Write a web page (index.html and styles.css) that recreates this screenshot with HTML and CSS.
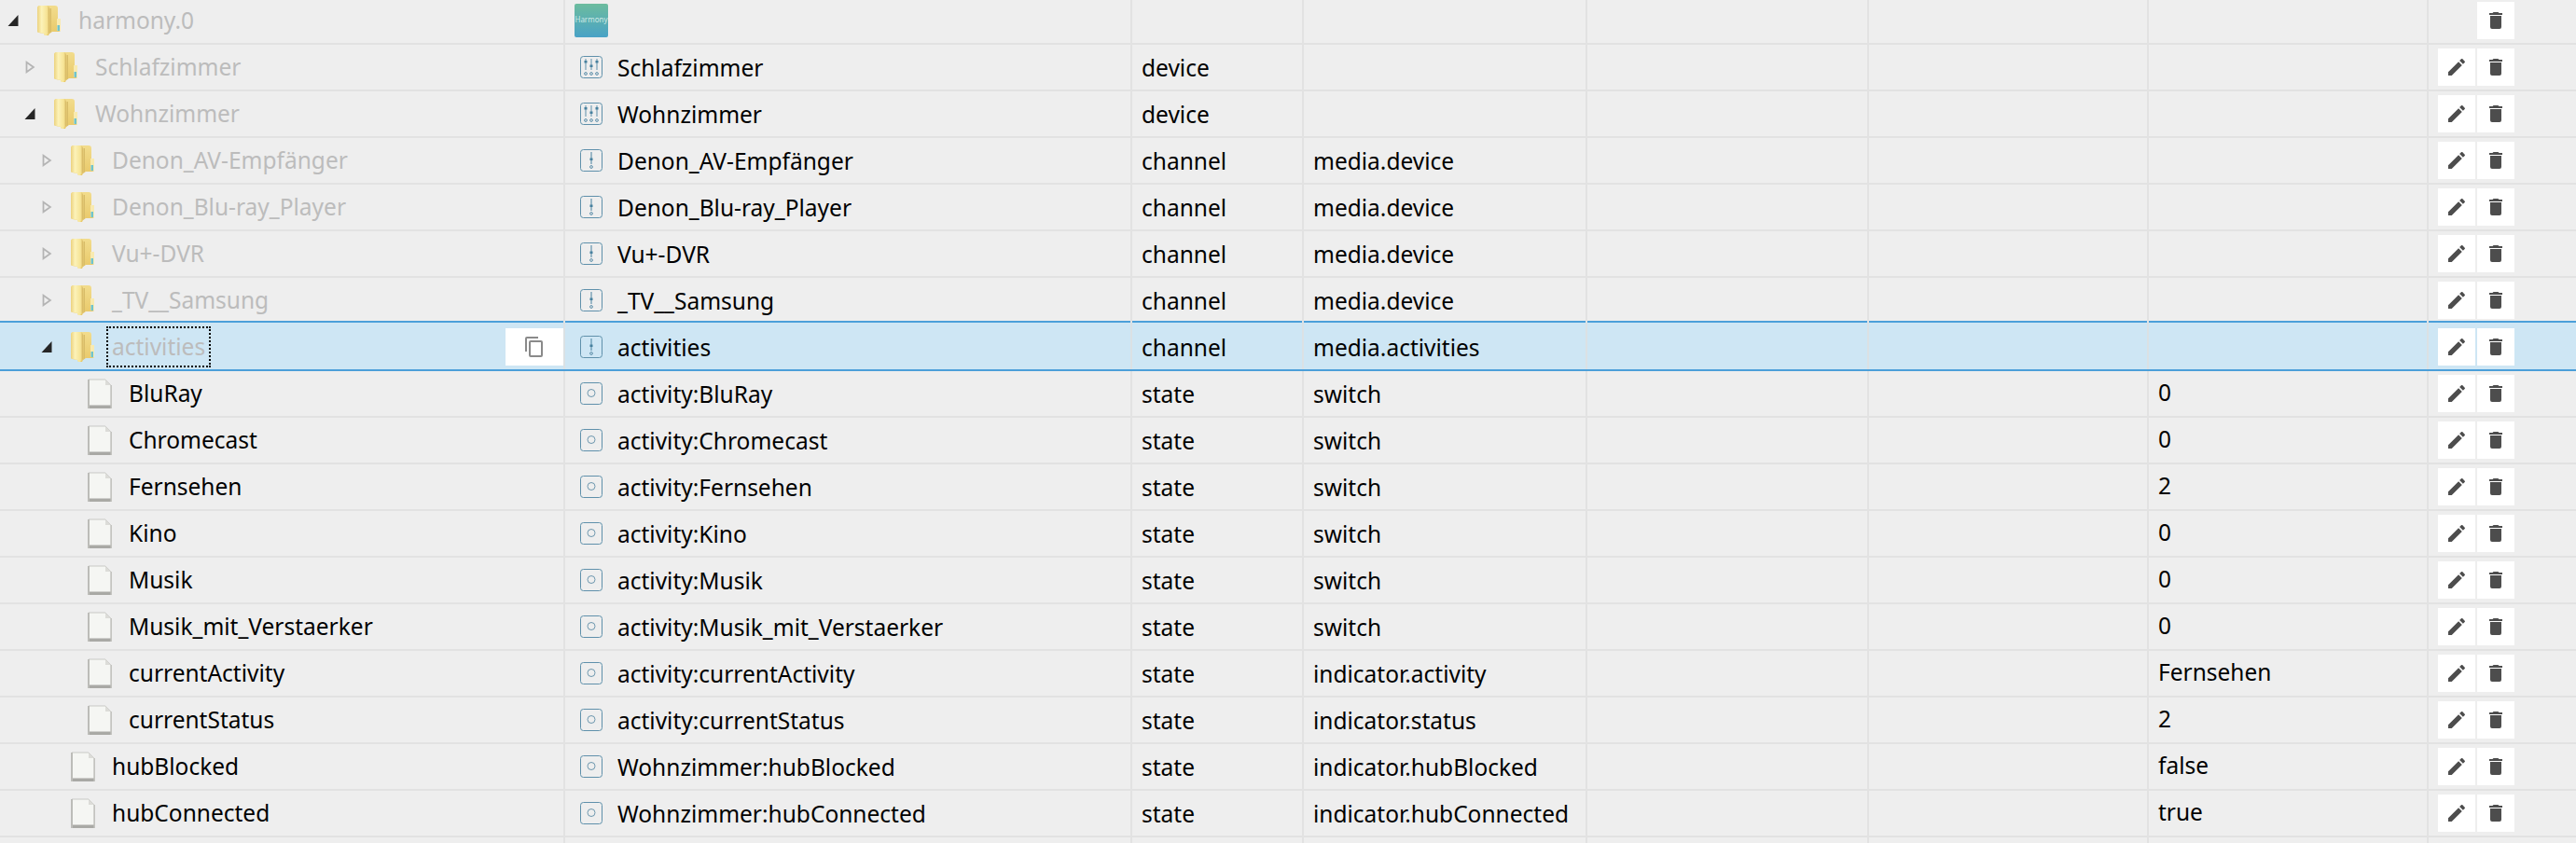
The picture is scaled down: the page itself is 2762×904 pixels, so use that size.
FILE: index.html
```html
<!DOCTYPE html>
<html lang="de">
<head>
<meta charset="utf-8">
<title>harmony.0</title>
<link rel="stylesheet" href="styles.css">
</head>
<body>
<svg class="defs" width="0" height="0" aria-hidden="true">
<defs>
<linearGradient id="fg" x1="0" y1="0" x2="0" y2="1"><stop offset="0" stop-color="#f2dc8c"/><stop offset="1" stop-color="#e8c868"/></linearGradient>
<linearGradient id="fd" x1="0" y1="0" x2="1" y2="0"><stop offset="0" stop-color="#ecd27e"/><stop offset=".35" stop-color="#fcf2b8"/><stop offset=".8" stop-color="#f6e394"/><stop offset="1" stop-color="#d4b45e"/></linearGradient>
<symbol id="folder" viewBox="0 0 26 32">
<path d="M3 0h16a3 3 0 0 1 3 3v11l3 1v11a2 2 0 0 1-2 2h-7l-3 2-1 2H8l-1-2-5-1a2 2 0 0 1-2-2V3a3 3 0 0 1 3-3z" fill="url(#fg)"/>
<path d="M3 0h7c2 0 3 2 3 4v25l-3 3H8l-1-2-5-1a2 2 0 0 1-2-2V3a3 3 0 0 1 3-3z" fill="url(#fd)"/>
<path d="M13.500 3h1.500v25l-1.500 2z" fill="#d8bc68"/>
<rect x="21" y="14" width="4" height="13" fill="#f8eab0"/><rect x="21.500" y="21" width="2.500" height="6" fill="#70c3cc"/>
</symbol>
<symbol id="file" viewBox="0 0 26 32">
<path d="M1 1h18l6 6v24H1z" fill="#f5f6f3" stroke="#c9c9c6"/>
<path d="M19 1v6h6z" fill="#dcdcd8"/>
<path d="M1 28.500h24V32H1z" fill="#a9a9a5"/><path d="M0 1h2v31H0z" fill="#bcbcb8"/><path d="M24.500 7h1.500v25h-1.500z" fill="#c4c4c0"/>
</symbol>
<symbol id="open" viewBox="0 0 12 14"><path d="M11.500 1v12H.5z" fill="#262626"/></symbol>
<symbol id="closed" viewBox="0 0 12 16"><path d="M2 2l8.500 6L2 14z" fill="none" stroke="#b4b4b4" stroke-width="2"/></symbol>
<symbol id="t-device" viewBox="0 0 24 24"><rect x=".5" y=".5" width="23" height="23" rx="3" fill="none" stroke="#5f90ab"/><path d="M6 3v12M12 3v12M18 3v12" stroke="#5f90ab" fill="none"/><path d="M4.500 5h3v2.500h-3zM10.500 9.500h3v2.500h-3zM16.500 5h3v2.500h-3z" fill="#47809e"/><circle cx="6" cy="19" r="1.400" fill="none" stroke="#5f90ab"/><circle cx="12" cy="19" r="1.400" fill="none" stroke="#5f90ab"/><circle cx="18" cy="19" r="1.400" fill="none" stroke="#5f90ab"/></symbol>
<symbol id="t-channel" viewBox="0 0 24 24"><rect x=".5" y=".5" width="23" height="23" rx="3" fill="none" stroke="#5f90ab"/><path d="M12 3v13" stroke="#47809e" fill="none"/><path d="M10.500 9.500h3v2.500h-3z" fill="#47809e"/><circle cx="12" cy="19" r="1.400" fill="none" stroke="#5f90ab"/></symbol>
<symbol id="t-state" viewBox="0 0 24 24"><rect x=".5" y=".5" width="23" height="23" rx="3" fill="none" stroke="#5f90ab"/><circle cx="12" cy="11.500" r="4" fill="none" stroke="#6d97ae"/></symbol>
<symbol id="edit" viewBox="0 0 24 24"><path d="M20.710 7.040c.39-.39.39-1.040 0-1.410l-2.340-2.340c-.37-.39-1.020-.39-1.410 0l-1.840 1.830 3.750 3.750M3 17.250V21h3.750L17.810 9.930l-3.750-3.750z"/></symbol>
<symbol id="del" viewBox="0 0 24 24"><path d="M19 4h-3.500l-1-1h-5l-1 1H5v2h14M6 19a2 2 0 0 0 2 2h8a2 2 0 0 0 2-2V7H6z"/></symbol>
<symbol id="copy" viewBox="0 0 24 24"><path d="M19 21H8V7h11m0-2H8a2 2 0 0 0-2 2v14a2 2 0 0 0 2 2h11a2 2 0 0 0 2-2V7a2 2 0 0 0-2-2m-3-4H4a2 2 0 0 0-2 2v14h2V3h12z"/></symbol>
</defs>
</svg>
<main class="tree">

<div class="row">
  <div class="cell name l0"><svg class="arrow"><use href="#open"/></svg><svg class="node"><use href="#folder"/></svg><span class="label muted">harmony.0</span></div>
  <div class="cell"><span class="logo">Harmony</span></div>
  <div class="cell"></div><div class="cell"></div><div class="cell"></div><div class="cell"></div><div class="cell"></div>
  <div class="cell actions"><span class="btn ghost"></span><span class="btn"><svg class="i"><use href="#del"/></svg></span></div>
</div>

<div class="row">
  <div class="cell name l1"><svg class="arrow"><use href="#closed"/></svg><svg class="node"><use href="#folder"/></svg><span class="label muted">Schlafzimmer</span></div>
  <div class="cell"><svg class="type"><use href="#t-device"/></svg>Schlafzimmer</div>
  <div class="cell">device</div><div class="cell"></div><div class="cell"></div><div class="cell"></div><div class="cell"></div>
  <div class="cell actions"><span class="btn"><svg class="i"><use href="#edit"/></svg></span><span class="btn"><svg class="i"><use href="#del"/></svg></span></div>
</div>

<div class="row">
  <div class="cell name l1"><svg class="arrow"><use href="#open"/></svg><svg class="node"><use href="#folder"/></svg><span class="label muted">Wohnzimmer</span></div>
  <div class="cell"><svg class="type"><use href="#t-device"/></svg>Wohnzimmer</div>
  <div class="cell">device</div><div class="cell"></div><div class="cell"></div><div class="cell"></div><div class="cell"></div>
  <div class="cell actions"><span class="btn"><svg class="i"><use href="#edit"/></svg></span><span class="btn"><svg class="i"><use href="#del"/></svg></span></div>
</div>

<div class="row">
  <div class="cell name l2"><svg class="arrow"><use href="#closed"/></svg><svg class="node"><use href="#folder"/></svg><span class="label muted">Denon_AV-Empfänger</span></div>
  <div class="cell"><svg class="type"><use href="#t-channel"/></svg>Denon_AV-Empfänger</div>
  <div class="cell">channel</div><div class="cell">media.device</div><div class="cell"></div><div class="cell"></div><div class="cell"></div>
  <div class="cell actions"><span class="btn"><svg class="i"><use href="#edit"/></svg></span><span class="btn"><svg class="i"><use href="#del"/></svg></span></div>
</div>

<div class="row">
  <div class="cell name l2"><svg class="arrow"><use href="#closed"/></svg><svg class="node"><use href="#folder"/></svg><span class="label muted">Denon_Blu-ray_Player</span></div>
  <div class="cell"><svg class="type"><use href="#t-channel"/></svg>Denon_Blu-ray_Player</div>
  <div class="cell">channel</div><div class="cell">media.device</div><div class="cell"></div><div class="cell"></div><div class="cell"></div>
  <div class="cell actions"><span class="btn"><svg class="i"><use href="#edit"/></svg></span><span class="btn"><svg class="i"><use href="#del"/></svg></span></div>
</div>

<div class="row">
  <div class="cell name l2"><svg class="arrow"><use href="#closed"/></svg><svg class="node"><use href="#folder"/></svg><span class="label muted">Vu+-DVR</span></div>
  <div class="cell"><svg class="type"><use href="#t-channel"/></svg>Vu+-DVR</div>
  <div class="cell">channel</div><div class="cell">media.device</div><div class="cell"></div><div class="cell"></div><div class="cell"></div>
  <div class="cell actions"><span class="btn"><svg class="i"><use href="#edit"/></svg></span><span class="btn"><svg class="i"><use href="#del"/></svg></span></div>
</div>

<div class="row">
  <div class="cell name l2"><svg class="arrow"><use href="#closed"/></svg><svg class="node"><use href="#folder"/></svg><span class="label muted">_TV__Samsung</span></div>
  <div class="cell"><svg class="type"><use href="#t-channel"/></svg>_TV__Samsung</div>
  <div class="cell">channel</div><div class="cell">media.device</div><div class="cell"></div><div class="cell"></div><div class="cell"></div>
  <div class="cell actions"><span class="btn"><svg class="i"><use href="#edit"/></svg></span><span class="btn"><svg class="i"><use href="#del"/></svg></span></div>
</div>

<div class="row selected">
  <div class="cell name l2"><svg class="arrow"><use href="#open"/></svg><svg class="node"><use href="#folder"/></svg><span class="label muted focus">activities</span><span class="btn copy"><svg class="i"><use href="#copy"/></svg></span></div>
  <div class="cell"><svg class="type"><use href="#t-channel"/></svg>activities</div>
  <div class="cell">channel</div><div class="cell">media.activities</div><div class="cell"></div><div class="cell"></div><div class="cell"></div>
  <div class="cell actions"><span class="btn"><svg class="i"><use href="#edit"/></svg></span><span class="btn"><svg class="i"><use href="#del"/></svg></span></div>
</div>

<div class="row">
  <div class="cell name l3"><span class="arrow"></span><svg class="node"><use href="#file"/></svg><span class="label">BluRay</span></div>
  <div class="cell"><svg class="type"><use href="#t-state"/></svg>activity:BluRay</div>
  <div class="cell">state</div><div class="cell">switch</div><div class="cell"></div><div class="cell"></div><div class="cell value">0</div>
  <div class="cell actions"><span class="btn"><svg class="i"><use href="#edit"/></svg></span><span class="btn"><svg class="i"><use href="#del"/></svg></span></div>
</div>

<div class="row">
  <div class="cell name l3"><span class="arrow"></span><svg class="node"><use href="#file"/></svg><span class="label">Chromecast</span></div>
  <div class="cell"><svg class="type"><use href="#t-state"/></svg>activity:Chromecast</div>
  <div class="cell">state</div><div class="cell">switch</div><div class="cell"></div><div class="cell"></div><div class="cell value">0</div>
  <div class="cell actions"><span class="btn"><svg class="i"><use href="#edit"/></svg></span><span class="btn"><svg class="i"><use href="#del"/></svg></span></div>
</div>

<div class="row">
  <div class="cell name l3"><span class="arrow"></span><svg class="node"><use href="#file"/></svg><span class="label">Fernsehen</span></div>
  <div class="cell"><svg class="type"><use href="#t-state"/></svg>activity:Fernsehen</div>
  <div class="cell">state</div><div class="cell">switch</div><div class="cell"></div><div class="cell"></div><div class="cell value">2</div>
  <div class="cell actions"><span class="btn"><svg class="i"><use href="#edit"/></svg></span><span class="btn"><svg class="i"><use href="#del"/></svg></span></div>
</div>

<div class="row">
  <div class="cell name l3"><span class="arrow"></span><svg class="node"><use href="#file"/></svg><span class="label">Kino</span></div>
  <div class="cell"><svg class="type"><use href="#t-state"/></svg>activity:Kino</div>
  <div class="cell">state</div><div class="cell">switch</div><div class="cell"></div><div class="cell"></div><div class="cell value">0</div>
  <div class="cell actions"><span class="btn"><svg class="i"><use href="#edit"/></svg></span><span class="btn"><svg class="i"><use href="#del"/></svg></span></div>
</div>

<div class="row">
  <div class="cell name l3"><span class="arrow"></span><svg class="node"><use href="#file"/></svg><span class="label">Musik</span></div>
  <div class="cell"><svg class="type"><use href="#t-state"/></svg>activity:Musik</div>
  <div class="cell">state</div><div class="cell">switch</div><div class="cell"></div><div class="cell"></div><div class="cell value">0</div>
  <div class="cell actions"><span class="btn"><svg class="i"><use href="#edit"/></svg></span><span class="btn"><svg class="i"><use href="#del"/></svg></span></div>
</div>

<div class="row">
  <div class="cell name l3"><span class="arrow"></span><svg class="node"><use href="#file"/></svg><span class="label">Musik_mit_Verstaerker</span></div>
  <div class="cell"><svg class="type"><use href="#t-state"/></svg>activity:Musik_mit_Verstaerker</div>
  <div class="cell">state</div><div class="cell">switch</div><div class="cell"></div><div class="cell"></div><div class="cell value">0</div>
  <div class="cell actions"><span class="btn"><svg class="i"><use href="#edit"/></svg></span><span class="btn"><svg class="i"><use href="#del"/></svg></span></div>
</div>

<div class="row">
  <div class="cell name l3"><span class="arrow"></span><svg class="node"><use href="#file"/></svg><span class="label">currentActivity</span></div>
  <div class="cell"><svg class="type"><use href="#t-state"/></svg>activity:currentActivity</div>
  <div class="cell">state</div><div class="cell">indicator.activity</div><div class="cell"></div><div class="cell"></div><div class="cell value">Fernsehen</div>
  <div class="cell actions"><span class="btn"><svg class="i"><use href="#edit"/></svg></span><span class="btn"><svg class="i"><use href="#del"/></svg></span></div>
</div>

<div class="row">
  <div class="cell name l3"><span class="arrow"></span><svg class="node"><use href="#file"/></svg><span class="label">currentStatus</span></div>
  <div class="cell"><svg class="type"><use href="#t-state"/></svg>activity:currentStatus</div>
  <div class="cell">state</div><div class="cell">indicator.status</div><div class="cell"></div><div class="cell"></div><div class="cell value">2</div>
  <div class="cell actions"><span class="btn"><svg class="i"><use href="#edit"/></svg></span><span class="btn"><svg class="i"><use href="#del"/></svg></span></div>
</div>

<div class="row">
  <div class="cell name l2"><span class="arrow"></span><svg class="node"><use href="#file"/></svg><span class="label">hubBlocked</span></div>
  <div class="cell"><svg class="type"><use href="#t-state"/></svg>Wohnzimmer:hubBlocked</div>
  <div class="cell">state</div><div class="cell">indicator.hubBlocked</div><div class="cell"></div><div class="cell"></div><div class="cell value">false</div>
  <div class="cell actions"><span class="btn"><svg class="i"><use href="#edit"/></svg></span><span class="btn"><svg class="i"><use href="#del"/></svg></span></div>
</div>

<div class="row">
  <div class="cell name l2"><span class="arrow"></span><svg class="node"><use href="#file"/></svg><span class="label">hubConnected</span></div>
  <div class="cell"><svg class="type"><use href="#t-state"/></svg>Wohnzimmer:hubConnected</div>
  <div class="cell">state</div><div class="cell">indicator.hubConnected</div><div class="cell"></div><div class="cell"></div><div class="cell value">true</div>
  <div class="cell actions"><span class="btn"><svg class="i"><use href="#edit"/></svg></span><span class="btn"><svg class="i"><use href="#del"/></svg></span></div>
</div>

<div class="row">
  <div class="cell name"></div><div class="cell"></div><div class="cell"></div><div class="cell"></div><div class="cell"></div><div class="cell"></div><div class="cell"></div><div class="cell actions"></div>
</div>

</main>
</body>
</html>
```
FILE: styles.css
```css
* { box-sizing: border-box; }
html, body { margin: 0; height: 904px; overflow: hidden; background: #eeeeee; }
body { font-family: "Noto Sans", "Open Sans", sans-serif; font-size: 24.5px; color: #000000; }
.defs { display: block; height: 0; }
.tree { margin-top: -2px; }
.row { display: grid; grid-template-columns: 606px 608px 184px 304px 302px 300px 300px 1fr; height: 50px; border-bottom: 2px solid #e2e2e2; background: #eeeeee; }
.cell { display: flex; align-items: center; min-width: 0; padding-left: 10px; border-right: 2px solid #e2e2e2; white-space: nowrap; }
.name { position: relative; }
.l0 { padding-left: 8px; }
.l1 { padding-left: 26px; }
.l2 { padding-left: 44px; }
.l3 { padding-left: 62px; }
.arrow { width: 12px; height: 14px; margin-right: 20px; flex: none; }
.node { width: 26px; height: 32px; flex: none; margin-right: 18px; }
.label { line-height: 32px; }
.muted { color: #bcbcbc; }
.type { width: 24px; height: 24px; margin-right: 16px; margin-left: 6px; flex: none; }
.logo { display: block; width: 36px; height: 36px; border-radius: 2px; background: linear-gradient(#6cbc9e, #49a2c6); color: #cfeae6; font-size: 8px; line-height: 34px; text-align: center; overflow: hidden; }
.value { padding-bottom: 4px; }
.actions { border-right: 0; padding-left: 10px; gap: 2px; }
.btn { display: flex; align-items: center; justify-content: center; width: 40px; height: 40px; background: #ffffff; flex: none; }
.btn.ghost { background: transparent; }
.i { width: 24px; height: 24px; fill: #4d4d4d; }
.copy { position: absolute; right: 0; top: 4px; width: 62px; }
.copy .i { fill: #8a8a8a; }
.selected { height: 54px; margin-top: -4px; border-top: 2px solid #4c9fd9; border-bottom: 2px solid #4c9fd9; background: #cee6f4; }
.selected .cell { padding-top: 2px; border-right-color: #dbe1e4; }
.selected .copy { top: 6px; }
.focus { outline: 2px dotted #000; outline-offset: 4px; }
```
